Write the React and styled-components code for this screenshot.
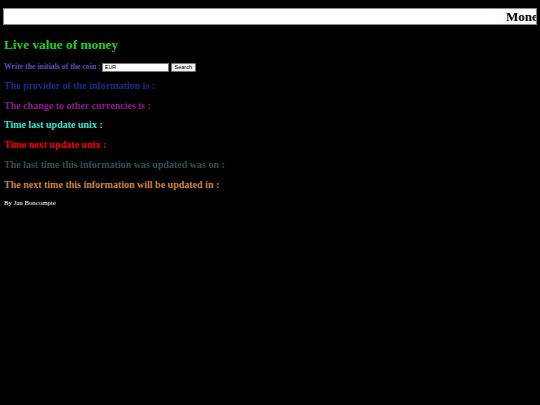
import React, { useState } from "react";
import styled, { createGlobalStyle } from "styled-components";

const GlobalStyle = createGlobalStyle`
  html, body {
    margin: 0;
    padding: 0;
    background: #000;
  }
  body {
    font-family: "Liberation Serif", "Times New Roman", serif;
    color: #fff;
  }
`;

const Page = styled.div`
  padding: 8px 3px 0;
`;

const Marquee = styled.div`
  height: 15px;
  background: #fff;
  border: 1px solid #8a8a8a;
  overflow: hidden;
  white-space: nowrap;
`;

const MarqueeText = styled.h2`
  margin: 0;
  padding-left: 502px;
  font-size: 13px;
  line-height: 15px;
  font-weight: bold;
  color: #000;
`;

const Content = styled.div`
  padding-left: 1px;
`;

const Title = styled.h2`
  margin: 11.5px 0 0;
  font-size: 13.3px;
  line-height: 16px;
  font-weight: bold;
  color: #22cc22;
`;

const SearchRow = styled.form`
  display: flex;
  align-items: center;
  height: 10px;
  margin-top: 9.5px;
`;

const Label = styled.label`
  font-size: 7.75px;
  font-weight: bold;
  line-height: 10px;
  color: #5d50bd;
  margin-right: 1px;
`;

const CoinInput = styled.input`
  box-sizing: border-box;
  width: 67px;
  height: 9px;
  padding: 0 2px;
  border: 1px solid #767676;
  background: #fff;
  font-family: "Liberation Sans", Arial, sans-serif;
  font-size: 5.5px;
  color: #000;
  outline: none;
`;

const SearchButton = styled.button`
  box-sizing: border-box;
  width: 25px;
  height: 9px;
  margin-left: 2px;
  padding: 0;
  border: 1px solid #767676;
  border-radius: 1px;
  background: #efefef;
  font-family: "Liberation Sans", Arial, sans-serif;
  font-size: 5.5px;
  line-height: 7px;
  color: #000;
`;

const Lines = styled.div`
  margin-top: 3.8px;
`;

const Info = styled.h3`
  margin: 0;
  font-size: 10px;
  line-height: 19.8px;
  font-weight: bold;
  color: ${({ $color }) => $color};
`;

const Footer = styled.p`
  margin: 4.6px 0 0;
  font-size: 6.8px;
  line-height: 8px;
  color: #fff;
`;

const lines = [
  { text: "The provider of the information is :", color: "#1a2d82" },
  { text: "The change to other currencies is :", color: "#8b1c8b" },
  { text: "Time last update unix :", color: "#40e0d0" },
  { text: "Time next update unix :", color: "#ee0000" },
  { text: "The last time this information was updated was on :", color: "#2f5055" },
  { text: "The next time this information will be updated in :", color: "#cd853f" },
];

export default function App() {
  const [coin, setCoin] = useState("EUR");

  return (
    <>
      <GlobalStyle />
      <Page>
        <Marquee>
          <MarqueeText>Money</MarqueeText>
        </Marquee>
        <Content>
          <Title>Live value of money</Title>
          <SearchRow onSubmit={(e) => e.preventDefault()}>
            <Label htmlFor="coin">Write the initials of the coin :</Label>
            <CoinInput
              id="coin"
              value={coin}
              onChange={(e) => setCoin(e.target.value)}
            />
            <SearchButton type="submit">Search</SearchButton>
          </SearchRow>
          <Lines>
            {lines.map((l) => (
              <Info key={l.text} $color={l.color}>
                {l.text}
              </Info>
            ))}
          </Lines>
          <Footer>By Jan Boncompte</Footer>
        </Content>
      </Page>
    </>
  );
}
